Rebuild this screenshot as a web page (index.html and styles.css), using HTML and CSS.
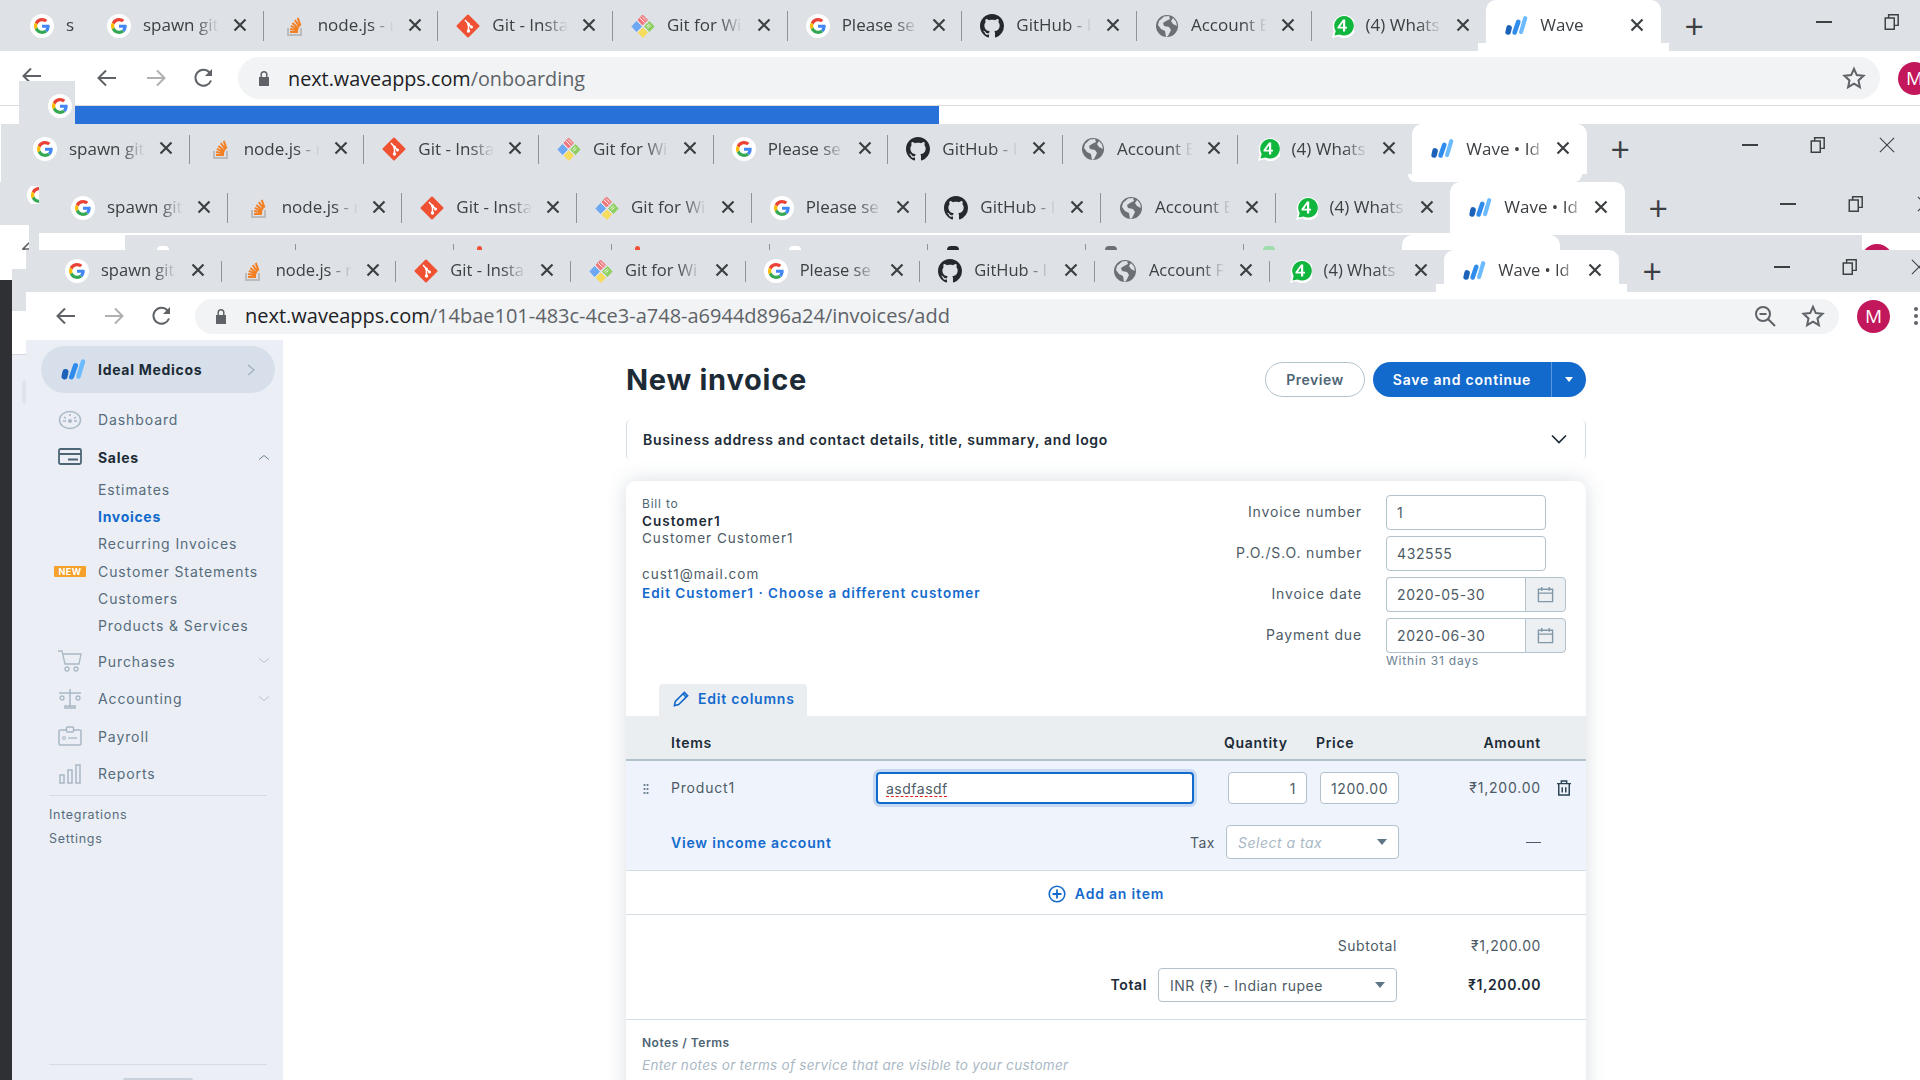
FILE: index.html
```html
<!DOCTYPE html>
<html lang="en">
<head>
    <meta charset="UTF-8">
    <title>Wave - New invoice</title>
    <link rel="stylesheet" href="styles.css">
</head>
<body>
    <svg class="defs" aria-hidden="true">
        <symbol id="i-google" viewBox="-12 -12 72 72">
            <circle cx="24" cy="24" r="36" fill="#fff"/>
            <path fill="#EA4335" d="M24 9.5c3.54 0 6.71 1.22 9.21 3.6l6.85-6.85C35.9 2.38 30.47 0 24 0 14.62 0 6.51 5.38 2.56 13.22l7.98 6.19C12.43 13.72 17.74 9.5 24 9.5z"/>
            <path fill="#4285F4" d="M46.98 24.55c0-1.57-.15-3.09-.38-4.55H24v9.02h12.94c-.58 2.96-2.26 5.48-4.78 7.18l7.73 6c4.51-4.18 7.09-10.36 7.09-17.65z"/>
            <path fill="#FBBC05" d="M10.53 28.59c-.48-1.45-.76-2.99-.76-4.59s.27-3.14.76-4.59l-7.98-6.19C.92 16.46 0 20.12 0 24c0 3.88.92 7.54 2.56 10.78l7.97-6.19z"/>
            <path fill="#34A853" d="M24 48c6.48 0 11.93-2.13 15.89-5.81l-7.73-6c-2.15 1.45-4.92 2.3-8.16 2.3-6.26 0-11.57-4.22-13.47-9.91l-7.98 6.19C6.51 42.62 14.62 48 24 48z"/>
        </symbol>
        <symbol id="i-so" viewBox="0 0 24 24">
            <path fill="#bcbbbb" d="M5 14h2v6h11v-6h2v8H5z"/>
            <path fill="#f48024" d="M8 17h8v2H8zM8.300 14l8 1.500-.4 2-8-1.600zM9.200 11l7.400 3.400-.8 1.800-7.400-3.400zM11 8.200l6.300 5.200-1.300 1.500-6.300-5.200zM13.600 5.600l4.800 6.500-1.600 1.200-4.800-6.500zM16.700 3.600l2.700 7.600-1.900.7-2.700-7.600z"/>
        </symbol>
        <symbol id="i-git" viewBox="0 0 24 24">
            <path fill="#f05133" stroke="#f05133" stroke-width="2" stroke-linejoin="round" d="M12 1.500L22.500 12 12 22.500 1.500 12z"/>
            <path stroke="#fff" stroke-width="1.500" fill="none" d="M9 6l3.500 4v7.500M12.500 10l3 3"/>
            <circle cx="12.500" cy="17" r="1.700" fill="#fff"/>
            <circle cx="12.500" cy="10" r="1.500" fill="#fff"/>
            <circle cx="15.500" cy="13" r="1.500" fill="#fff"/>
        </symbol>
        <symbol id="i-gitwin" viewBox="0 0 24 24">
            <g stroke-width="1" stroke-linejoin="round">
                <path fill="#f0787c" stroke="#f0787c" d="M11.500 1l5 5-5 5-4.500-5z"/>
                <path fill="#6ea8f2" stroke="#6ea8f2" d="M5.500 7.500l5 5-5 5L1 12.500z"/>
                <path fill="#8fd060" stroke="#8fd060" d="M18.500 7.500l4.500 5-4.500 5-5-5z"/>
                <path fill="#f6dc5c" stroke="#f6dc5c" d="M12 14l4.500 4.500-4.500 5-5-5z"/>
            </g>
            <path stroke="#fff" stroke-width=".9" fill="none" d="M9 4l4.500 4.500M11 2.500l4 4M15.500 12.500l3-2.500M16.500 14l3-2.500"/>
        </symbol>
        <symbol id="i-github" viewBox="0 0 16 16">
            <path fill="#24292e" d="M8 0C3.58 0 0 3.58 0 8c0 3.54 2.29 6.53 5.47 7.59.4.07.55-.17.55-.38 0-.19-.01-.82-.01-1.49-2.01.37-2.53-.49-2.69-.94-.09-.23-.48-.94-.82-1.13-.28-.15-.68-.52-.01-.53.63-.01 1.08.58 1.23.82.72 1.21 1.87.87 2.33.66.07-.52.28-.87.51-1.07-1.78-.2-3.64-.89-3.64-3.95 0-.87.31-1.59.82-2.15-.08-.2-.36-1.02.08-2.12 0 0 .67-.21 2.2.82.64-.18 1.32-.27 2-.27.68 0 1.36.09 2 .27 1.53-1.04 2.2-.82 2.2-.82.44 1.1.16 1.92.08 2.12.51.56.82 1.27.82 2.15 0 3.07-1.87 3.75-3.65 3.95.29.25.54.73.54 1.48 0 1.07-.01 1.93-.01 2.2 0 .21.15.46.55.38A8.013 8.013 0 0016 8c0-4.42-3.58-8-8-8z"/>
        </symbol>
        <symbol id="i-globe" viewBox="0 0 24 24">
            <circle cx="12" cy="12" r="11" fill="#6b7075"/>
            <path fill="#dee1e6" d="M9 2.500l5-.5 1 3-4 2-3 2 1 3 5 1 2 3-3 6-2 1-1-6-4-2-3-4 1-4zM18 4l3 3.500 1 4.500-4-2-2-3z"/>
        </symbol>
        <symbol id="i-whats" viewBox="0 0 24 24">
            <path fill="#fff" d="M2 24l1.800-6.500A11.500 11.500 0 1 1 8 22.300z"/>
            <path fill="#11b63e" d="M4.500 21.500l1.200-4.500A9.800 9.800 0 1 1 9.500 20.500z"/>
            <path fill="#fff" d="M13 5.500h2.200v7.200H17v1.800h-1.800v3H13v-3H7.500v-1.600zM13 8.500l-3 4.200h3z"/>
        </symbol>
        <symbol id="i-wave" viewBox="0 0 26 24">
            <g fill="none" stroke-linecap="round">
                <path stroke="#1c62b8" stroke-width="6" d="M5.500 14L4.500 18.500"/>
                <path stroke="#2f8bec" stroke-width="5" d="M11.500 19L15.500 7.500"/>
                <path stroke="#6dbbff" stroke-width="4.500" d="M18.500 18.500L23 3.500"/>
            </g>
        </symbol>
        <symbol id="i-x" viewBox="0 0 14 14">
            <path stroke="#3c4043" stroke-width="2.200" fill="none" d="M1.500 1.500l11 11M12.500 1.500l-11 11"/>
        </symbol>
        <symbol id="i-x-thin" viewBox="0 0 18 18">
            <path stroke="#3c4043" stroke-width="1.200" fill="none" d="M1 1l16 16M17 1L1 17"/>
        </symbol>
        <symbol id="i-back" viewBox="0 0 24 24">
            <path stroke="#5f6368" stroke-width="2" fill="none" d="M21 12H4M11 4.500L3.500 12l7.500 7.500"/>
        </symbol>
        <symbol id="i-reload" viewBox="0 0 24 24">
            <path stroke="#5f6368" stroke-width="2" fill="none" d="M19 14.500A8 8 0 1 1 17.500 6.500"/>
            <path fill="#5f6368" d="M20 3v7h-7z"/>
        </symbol>
        <symbol id="i-lock" viewBox="0 0 12 16">
            <path fill="#5f6368" d="M1 7h10v9H1z"/>
            <path stroke="#5f6368" stroke-width="1.500" fill="none" d="M3.200 7V4.500a2.800 2.800 0 0 1 5.600 0V7"/>
        </symbol>
        <symbol id="i-star" viewBox="0 0 24 24">
            <path stroke="#5f6368" stroke-width="2" fill="none" d="M12 2.800l2.800 6.300 6.700.7-5 4.600 1.400 6.800-5.900-3.500-5.900 3.500 1.400-6.800-5-4.600 6.700-.7z"/>
        </symbol>
        <symbol id="i-restore" viewBox="0 0 16 16">
            <path stroke="#3c4043" stroke-width="1.300" fill="none" d="M2 4.500h8v10H2zM5 4.500V1.500h8.500V11H10"/>
        </symbol>
        <symbol id="i-cal" viewBox="0 0 18 18">
            <path stroke="#8198a8" stroke-width="1.500" fill="none" d="M1.500 3.500h15v13h-15zM1.500 7.500h15M5 1v4M13 1v4"/>
        </symbol>
        <symbol id="i-caret" viewBox="0 0 10 6">
            <path fill="currentColor" d="M0 0h10L5 6z"/>
        </symbol>
    </svg>

    <!-- oldest window, top of the pile -->
    <div class="win win-a">
        <div class="strip">
            <div class="tab stub"><svg class="fav"><use href="#i-google"/></svg><span class="title">s</span></div>
            <div class="tab"><svg class="fav"><use href="#i-google"/></svg><span class="title">spawn git</span><svg class="close"><use href="#i-x"/></svg></div>
            <div class="tab"><svg class="fav"><use href="#i-so"/></svg><span class="title">node.js - r</span><svg class="close"><use href="#i-x"/></svg></div>
            <div class="tab"><svg class="fav"><use href="#i-git"/></svg><span class="title">Git - Insta</span><svg class="close"><use href="#i-x"/></svg></div>
            <div class="tab"><svg class="fav"><use href="#i-gitwin"/></svg><span class="title">Git for Wi</span><svg class="close"><use href="#i-x"/></svg></div>
            <div class="tab"><svg class="fav"><use href="#i-google"/></svg><span class="title">Please se</span><svg class="close"><use href="#i-x"/></svg></div>
            <div class="tab"><svg class="fav"><use href="#i-github"/></svg><span class="title">GitHub - I</span><svg class="close"><use href="#i-x"/></svg></div>
            <div class="tab"><svg class="fav"><use href="#i-globe"/></svg><span class="title">Account E</span><svg class="close"><use href="#i-x"/></svg></div>
            <div class="tab last"><svg class="fav"><use href="#i-whats"/></svg><span class="title">(4) Whats</span><svg class="close"><use href="#i-x"/></svg></div>
            <div class="tab active"><svg class="fav"><use href="#i-wave"/></svg><span class="title">Wave</span><svg class="close"><use href="#i-x"/></svg></div>
            <div class="new-tab">+</div>
            <div class="win-ctl"><span class="min"></span><svg class="restore"><use href="#i-restore"/></svg></div>
        </div>
        <div class="toolbar">
            <div class="nav-btns">
                <svg class="tool"><use href="#i-back"/></svg>
                <svg class="tool faded flip"><use href="#i-back"/></svg>
                <svg class="tool"><use href="#i-reload"/></svg>
            </div>
            <div class="omnibox">
                <svg class="lock"><use href="#i-lock"/></svg>
                <span class="url">next.waveapps.com<span class="path">/onboarding</span></span>
                <svg class="tool star"><use href="#i-star"/></svg>
            </div>
            <div class="avatar">M</div>
        </div>
        <div class="loading"><div class="loading-bar"></div></div>
    </div>

    <!-- bits of the window behind at the top left -->
    <div class="scrap back-arrow-top"><svg class="tool"><use href="#i-back"/></svg></div>
    <div class="scrap g-block"><svg class="fav"><use href="#i-google"/></svg></div>

    <div class="win win-b">
        <div class="strip">
            <div class="tab"><svg class="fav"><use href="#i-google"/></svg><span class="title">spawn git</span><svg class="close"><use href="#i-x"/></svg></div>
            <div class="tab"><svg class="fav"><use href="#i-so"/></svg><span class="title">node.js - r</span><svg class="close"><use href="#i-x"/></svg></div>
            <div class="tab"><svg class="fav"><use href="#i-git"/></svg><span class="title">Git - Insta</span><svg class="close"><use href="#i-x"/></svg></div>
            <div class="tab"><svg class="fav"><use href="#i-gitwin"/></svg><span class="title">Git for Wi</span><svg class="close"><use href="#i-x"/></svg></div>
            <div class="tab"><svg class="fav"><use href="#i-google"/></svg><span class="title">Please se</span><svg class="close"><use href="#i-x"/></svg></div>
            <div class="tab"><svg class="fav"><use href="#i-github"/></svg><span class="title">GitHub - I</span><svg class="close"><use href="#i-x"/></svg></div>
            <div class="tab"><svg class="fav"><use href="#i-globe"/></svg><span class="title">Account E</span><svg class="close"><use href="#i-x"/></svg></div>
            <div class="tab last"><svg class="fav"><use href="#i-whats"/></svg><span class="title">(4) Whats</span><svg class="close"><use href="#i-x"/></svg></div>
            <div class="tab active"><svg class="fav"><use href="#i-wave"/></svg><span class="title">Wave • Id</span><svg class="close"><use href="#i-x"/></svg></div>
            <div class="new-tab">+</div>
            <div class="win-ctl"><span class="min"></span><svg class="restore"><use href="#i-restore"/></svg><svg class="ctl-x"><use href="#i-x-thin"/></svg></div>
        </div>
        <div class="tab-foot"></div>
    </div>

    <div class="win win-c">
        <div class="strip">
            <div class="tab"><svg class="fav"><use href="#i-google"/></svg><span class="title">spawn git</span><svg class="close"><use href="#i-x"/></svg></div>
            <div class="tab"><svg class="fav"><use href="#i-so"/></svg><span class="title">node.js - r</span><svg class="close"><use href="#i-x"/></svg></div>
            <div class="tab"><svg class="fav"><use href="#i-git"/></svg><span class="title">Git - Insta</span><svg class="close"><use href="#i-x"/></svg></div>
            <div class="tab"><svg class="fav"><use href="#i-gitwin"/></svg><span class="title">Git for Wi</span><svg class="close"><use href="#i-x"/></svg></div>
            <div class="tab"><svg class="fav"><use href="#i-google"/></svg><span class="title">Please se</span><svg class="close"><use href="#i-x"/></svg></div>
            <div class="tab"><svg class="fav"><use href="#i-github"/></svg><span class="title">GitHub - I</span><svg class="close"><use href="#i-x"/></svg></div>
            <div class="tab"><svg class="fav"><use href="#i-globe"/></svg><span class="title">Account E</span><svg class="close"><use href="#i-x"/></svg></div>
            <div class="tab last"><svg class="fav"><use href="#i-whats"/></svg><span class="title">(4) Whats</span><svg class="close"><use href="#i-x"/></svg></div>
            <div class="tab active"><svg class="fav"><use href="#i-wave"/></svg><span class="title">Wave • Id</span><svg class="close"><use href="#i-x"/></svg></div>
            <div class="new-tab">+</div>
            <div class="win-ctl"><span class="min"></span><svg class="restore"><use href="#i-restore"/></svg><svg class="ctl-x"><use href="#i-x-thin"/></svg></div>
        </div>
    </div>
    <div class="scrap g-clip"><svg class="fav"><use href="#i-google"/></svg></div>

    <!-- sliver of one more window, only the tops of its tabs show -->
    <div class="scrap left-gray"></div>
    <div class="scrap sliver">
        <div class="sliver-strip">
            <div class="sliver-tab sep"><i class="blip white"></i></div>
            <div class="sliver-tab sep"></div>
            <div class="sliver-tab sep"><i class="blip red"></i></div>
            <div class="sliver-tab sep"><i class="blip red"></i></div>
            <div class="sliver-tab sep"><i class="blip white"></i></div>
            <div class="sliver-tab sep"><i class="blip dark"></i></div>
            <div class="sliver-tab sep"><i class="blip gray"></i></div>
            <div class="sliver-tab"><i class="blip green"></i></div>
            <div class="sliver-active"></div>
        </div>
        <i class="sliver-avatar"></i>
    </div>
    <div class="scrap left-white"><svg class="tool"><use href="#i-back"/></svg></div>
    <div class="scrap left-white2"></div>
    <div class="scrap left-white3"></div>
    <div class="scrap left-gray2"></div>
    <div class="scrap dark-rail"></div>
    <div class="scrap side-rail"></div>
    <div class="scrap side-bump"></div>

    <!-- front window with the invoice form -->
    <div class="win win-d">
        <div class="strip">
            <div class="tab"><svg class="fav"><use href="#i-google"/></svg><span class="title">spawn git</span><svg class="close"><use href="#i-x"/></svg></div>
            <div class="tab"><svg class="fav"><use href="#i-so"/></svg><span class="title">node.js - r</span><svg class="close"><use href="#i-x"/></svg></div>
            <div class="tab"><svg class="fav"><use href="#i-git"/></svg><span class="title">Git - Insta</span><svg class="close"><use href="#i-x"/></svg></div>
            <div class="tab"><svg class="fav"><use href="#i-gitwin"/></svg><span class="title">Git for Wi</span><svg class="close"><use href="#i-x"/></svg></div>
            <div class="tab"><svg class="fav"><use href="#i-google"/></svg><span class="title">Please se</span><svg class="close"><use href="#i-x"/></svg></div>
            <div class="tab"><svg class="fav"><use href="#i-github"/></svg><span class="title">GitHub - I</span><svg class="close"><use href="#i-x"/></svg></div>
            <div class="tab"><svg class="fav"><use href="#i-globe"/></svg><span class="title">Account F</span><svg class="close"><use href="#i-x"/></svg></div>
            <div class="tab last"><svg class="fav"><use href="#i-whats"/></svg><span class="title">(4) Whats</span><svg class="close"><use href="#i-x"/></svg></div>
            <div class="tab active"><svg class="fav"><use href="#i-wave"/></svg><span class="title">Wave • Id</span><svg class="close"><use href="#i-x"/></svg></div>
            <div class="new-tab">+</div>
            <div class="win-ctl"><span class="min"></span><svg class="restore"><use href="#i-restore"/></svg><svg class="ctl-x"><use href="#i-x-thin"/></svg></div>
        </div>
        <div class="toolbar">
            <div class="nav-btns">
                <svg class="tool"><use href="#i-back"/></svg>
                <svg class="tool faded flip"><use href="#i-back"/></svg>
                <svg class="tool"><use href="#i-reload"/></svg>
            </div>
            <div class="omnibox">
                <svg class="lock"><use href="#i-lock"/></svg>
                <span class="url">next.waveapps.com<span class="path">/14bae101-483c-4ce3-a748-a6944d896a24/invoices/add</span></span>
                <svg class="tool zoom-out" viewBox="0 0 24 24"><circle cx="10" cy="10" r="7" stroke="#5f6368" stroke-width="2" fill="none"/><path stroke="#5f6368" stroke-width="2" d="M6.500 10h7M15 15l7 7"/></svg>
                <svg class="tool star"><use href="#i-star"/></svg>
            </div>
            <div class="avatar">M</div>
            <div class="kebab"><i></i><i></i><i></i></div>
        </div>

        <div class="app">
            <aside class="sidebar">
                <div class="biz-pill">
                    <svg class="biz-logo"><use href="#i-wave"/></svg>
                    <span class="biz-name">Ideal Medicos</span>
                    <svg class="biz-arrow" viewBox="0 0 8 12"><path stroke="#9fb0bd" stroke-width="1.300" fill="none" d="M1 1l6 5-6 5"/></svg>
                </div>
                <nav class="side-nav">
                    <a class="nav-row">
                        <svg class="nav-icon" viewBox="0 0 24 24"><ellipse cx="12" cy="12" rx="10.500" ry="8.500" fill="none" stroke="#a9b8c4" stroke-width="1.500"/><circle cx="12" cy="13" r="2" fill="#a9b8c4"/><path stroke="#a9b8c4" stroke-width="1.500" d="M12 6v2M6 9l2 1.500M18 9l-2 1.500M5 13h3M16 13h3"/></svg>
                        Dashboard
                    </a>
                    <a class="nav-row current">
                        <svg class="nav-icon" viewBox="0 0 24 24"><rect x="1" y="4" width="22" height="15" rx="1.500" fill="none" stroke="#4d6575" stroke-width="1.800"/><path stroke="#4d6575" stroke-width="1.800" d="M1 9h22M10 14.500h10"/></svg>
                        Sales
                        <svg class="nav-chev up" viewBox="0 0 12 6"><path stroke="#6f8494" fill="none" d="M1 5.500l5-4 5 4"/></svg>
                    </a>
                    <div class="sub-nav">
                        <a class="sub-row">Estimates</a>
                        <a class="sub-row on">Invoices</a>
                        <a class="sub-row">Recurring Invoices</a>
                        <a class="sub-row"><span class="new-badge">NEW</span>Customer Statements</a>
                        <a class="sub-row">Customers</a>
                        <a class="sub-row">Products &amp; Services</a>
                    </div>
                    <a class="nav-row">
                        <svg class="nav-icon" viewBox="0 0 24 24"><path fill="none" stroke="#a9b8c4" stroke-width="1.300" d="M0 2h4l3 13h14l2-10H5"/><circle cx="9" cy="20" r="2" fill="none" stroke="#a9b8c4" stroke-width="1.300"/><circle cx="18" cy="20" r="2" fill="none" stroke="#a9b8c4" stroke-width="1.300"/></svg>
                        Purchases
                        <svg class="nav-chev" viewBox="0 0 12 6"><path stroke="#b5c2cc" fill="none" d="M1 .5l5 4 5-4"/></svg>
                    </a>
                    <a class="nav-row">
                        <svg class="nav-icon" viewBox="0 0 24 24"><path fill="none" stroke="#a9b8c4" stroke-width="1.500" d="M1 6h22M12 2v18M7 21h10v-2H7z"/><circle cx="4" cy="11" r="2" fill="none" stroke="#a9b8c4" stroke-width="1.300"/><circle cx="20" cy="11" r="2" fill="none" stroke="#a9b8c4" stroke-width="1.300"/></svg>
                        Accounting
                        <svg class="nav-chev" viewBox="0 0 12 6"><path stroke="#b5c2cc" fill="none" d="M1 .5l5 4 5-4"/></svg>
                    </a>
                    <a class="nav-row">
                        <svg class="nav-icon" viewBox="0 0 24 24"><rect x="1" y="6" width="22" height="15" rx="1" fill="none" stroke="#a9b8c4" stroke-width="1.500"/><rect x="8.500" y="3" width="7" height="5" rx="1" fill="#ebeff5" stroke="#a9b8c4" stroke-width="1.500"/><circle cx="6" cy="14" r="1.500" fill="none" stroke="#a9b8c4"/><path stroke="#a9b8c4" stroke-width="1.300" d="M10 14h9"/></svg>
                        Payroll
                    </a>
                    <a class="nav-row">
                        <svg class="nav-icon" viewBox="0 0 24 24"><path fill="none" stroke="#a9b8c4" stroke-width="1.500" d="M2 13h4v8H2zM10 8h4v13h-4zM18 3h4v18h-4z"/></svg>
                        Reports
                    </a>
                </nav>
                <div class="side-links">
                    <a class="side-link">Integrations</a>
                    <a class="side-link">Settings</a>
                </div>
                <div class="side-foot"><i></i></div>
            </aside>

            <main class="main">
                <header class="page-head">
                    <h1>New invoice</h1>
                    <div class="page-actions">
                        <button class="btn-outline">Preview</button>
                        <div class="btn-split">
                            <span class="btn-save">Save and continue</span>
                            <span class="btn-more"><svg class="caret"><use href="#i-caret"/></svg></span>
                        </div>
                    </div>
                </header>

                <div class="biz-panel">
                    <span>Business address and contact details, title, summary, and logo</span>
                    <svg class="panel-chev" viewBox="0 0 16 10"><path stroke="#1c2b36" stroke-width="1.700" fill="none" d="M1 1.500l7 7 7-7"/></svg>
                </div>

                <section class="card">
                    <div class="inv-head">
                        <div class="bill-to">
                            <div class="bill-label">Bill to</div>
                            <div class="bill-name">Customer1</div>
                            <div>Customer Customer1</div>
                            <div>&nbsp;</div>
                            <div>cust1@mail.com</div>
                            <div class="bill-links"><a>Edit Customer1</a> · <a>Choose a different customer</a></div>
                        </div>
                        <div class="inv-fields">
                            <label class="f-label">Invoice number</label>
                            <input class="f-input" value="1">
                            <label class="f-label">P.O./S.O. number</label>
                            <input class="f-input" value="432555">
                            <label class="f-label">Invoice date</label>
                            <div class="date-field"><input value="2020-05-30"><span class="date-btn"><svg><use href="#i-cal"/></svg></span></div>
                            <label class="f-label">Payment due</label>
                            <div class="date-field"><input value="2020-06-30"><span class="date-btn"><svg><use href="#i-cal"/></svg></span></div>
                            <span></span>
                            <div class="f-hint">Within 31 days</div>
                        </div>
                    </div>

                    <div class="edit-cols">
                        <svg viewBox="0 0 18 18"><path stroke="#136acd" stroke-width="1.700" fill="none" d="M1.500 16.500l1-4.500L12 2.500l3.500 3.500L6 15.500zM10.500 4l3.500 3.500"/></svg>
                        Edit columns
                    </div>

                    <div class="item-grid item-head">
                        <span class="col-name">Items</span>
                        <span class="col-qty">Quantity</span>
                        <span class="col-price">Price</span>
                        <span class="col-amount">Amount</span>
                    </div>

                    <div class="item-body">
                        <div class="item-grid">
                            <span class="drag"></span>
                            <span class="col-name plain">Product1</span>
                            <div class="desc-input"><span class="misspelt">asdfasdf</span></div>
                            <input class="cell-input qty" value="1">
                            <input class="cell-input price" value="1200.00">
                            <span class="col-amount plain">₹1,200.00</span>
                            <svg class="trash" viewBox="0 0 16 18"><path stroke="#2d4454" stroke-width="1.700" fill="none" d="M0 4h16M2 4v13h12V4M5 4V1h6v3M6 8v6M10 8v6"/></svg>
                        </div>
                        <div class="item-grid tax-row">
                            <a class="income-link">View income account</a>
                            <span class="tax-label">Tax</span>
                            <div class="select-box tax-select"><em>Select a tax</em><svg class="caret"><use href="#i-caret"/></svg></div>
                            <span class="col-amount dash"></span>
                        </div>
                    </div>

                    <div class="add-item">
                        <svg viewBox="0 0 18 18"><circle cx="9" cy="9" r="7.800" stroke="#136acd" stroke-width="1.600" fill="none"/><path stroke="#136acd" stroke-width="1.800" d="M9 4.500v9M4.500 9h9"/></svg>
                        Add an item
                    </div>

                    <div class="totals">
                        <div class="total-row">
                            <span>Subtotal</span>
                            <span class="total-val">₹1,200.00</span>
                        </div>
                        <div class="total-row grand">
                            <strong>Total</strong>
                            <div class="select-box cur-select"><span>INR (₹) - Indian rupee</span><svg class="caret"><use href="#i-caret"/></svg></div>
                            <strong class="total-val">₹1,200.00</strong>
                        </div>
                    </div>

                    <div class="notes">
                        <div class="notes-label">Notes / Terms</div>
                        <div class="notes-hint">Enter notes or terms of service that are visible to your customer</div>
                    </div>
                </section>
            </main>
        </div>
    </div>
</body>
</html>
```

FILE: styles.css
```css
* {
    box-sizing: border-box;
}

html, body {
    height: 100%;
}

body {
    margin: 0;
    overflow: hidden;
    position: relative;
    background-color: #fff;
    color: #1c2b36;
    font-family: 'Inter', 'Liberation Sans', sans-serif;
    font-size: 14px;
}

a {
    color: inherit;
}

.defs {
    position: absolute;
    width: 0;
    height: 0;
}

/* windows on the pile */
.win {
    position: absolute;
    left: 0;
    right: 0;
}
.win-a { top: 0; height: 124px; }
.win-b { top: 124px; left: 1px; height: 58px; background-color: #dee1e6; }
.win-c { top: 182px; height: 51px; background-color: #dee1e6; }
.win-d { top: 250px; left: 26px; bottom: 0; display: flex; flex-direction: column; background-color: #fff; }

.strip {
    display: flex;
    align-items: center;
    height: 51px;
    background-color: #dee1e6;
    font-family: 'Open Sans', sans-serif;
    font-size: 17px;
    color: #3c4043;
    overflow: hidden;
}
.win-a .strip { padding-left: 12px; }
.win-b .strip { height: 50px; padding-left: 14px; }
.win-c .strip { padding-left: 53px; }
.win-d .strip { height: 42px; padding-left: 21px; font-size: 16.500px; }

.tab {
    position: relative;
    flex: none;
    display: flex;
    align-items: center;
    width: 174.67px;
    height: 100%;
    padding-left: 18px;
}
.tab::after {
    content: '';
    position: absolute;
    right: 0;
    top: 11px;
    bottom: 10px;
    width: 1px;
    background-color: #8f9498;
}
.tab.last::after, .tab.stub::after, .tab.active::after {
    display: none;
}
.tab.stub {
    width: 77px;
}
.tab.stub .title {
    width: 12px;
    margin-left: 12px;
}
.tab.active {
    width: 175px;
    background-color: #fff;
    border-radius: 10px 10px 0 0;
}
.tab.active::before {
    content: '';
    position: absolute;
    left: -8px;
    right: -8px;
    bottom: 0;
    height: 8px;
    z-index: -1;
    background-color: #fff;
}
.win-a .tab.active, .win-d .tab.active { z-index: 1; }

.fav {
    flex: none;
    width: 24px;
    height: 24px;
}
.title {
    flex: none;
    width: 80px;
    margin: -2px 0 0 12px;
    white-space: nowrap;
    -webkit-mask-image: linear-gradient(90deg, #000 65%, transparent 95%);
    mask-image: linear-gradient(90deg, #000 65%, transparent 95%);
}
.win-d .title {
    margin-top: -3px;
}
.tab.active .title {
    -webkit-mask-image: linear-gradient(90deg, #000 78%, transparent);
    mask-image: linear-gradient(90deg, #000 78%, transparent);
}
.close {
    flex: none;
    width: 14px;
    height: 14px;
    margin: -2px 0 0 10px;
}
.new-tab {
    flex: none;
    width: 28px;
    margin-left: 19px;
    text-align: center;
    font-size: 34px;
    line-height: 34px;
    font-weight: 400;
    color: #3c4043;
}
.win-ctl {
    flex: none;
    display: flex;
    align-items: center;
    margin-left: 108px;
    margin-top: -8px;
}
.win-ctl .min {
    width: 16px;
    height: 2px;
    background-color: #3c4043;
}
.win-ctl .restore {
    width: 18px;
    height: 18px;
    margin-left: 51px;
}
.ctl-x {
    flex: none;
    width: 16px;
    height: 20px;
    margin-left: 52px;
}

/* address bar */
.toolbar {
    display: flex;
    align-items: center;
    height: 54px;
    background-color: #fff;
}
.win-d .toolbar {
    height: 48px;
    flex: none;
}
.nav-btns {
    display: flex;
    gap: 24.5px;
    padding-left: 95px;
}
.win-d .nav-btns {
    gap: 24px;
    padding-left: 28px;
}
.tool {
    width: 24px;
    height: 24px;
    flex: none;
}
.faded { opacity: .5; }
.flip { transform: scaleX(-1); }

.omnibox {
    flex: none;
    display: flex;
    align-items: center;
    width: 1642px;
    height: 42px;
    margin-left: 22px;
    padding-left: 20px;
    border-radius: 21px;
    background-color: #f1f3f4;
}
.win-d .omnibox {
    width: 1644px;
    height: 35px;
    margin-left: 21px;
    border-radius: 18px;
}
.lock {
    width: 12px;
    height: 16px;
    flex: none;
}
.url {
    margin-left: 18px;
    font-family: 'Open Sans', sans-serif;
    font-size: 19.800px;
    color: #202124;
    white-space: nowrap;
}
.win-d .url {
    margin: -2px 0 0 18px;
    font-size: 20px;
}
.path {
    color: #5f6368;
}
.star {
    margin-left: auto;
    margin-right: 14px;
}
.zoom-out {
    margin-left: auto;
    margin-right: 24px;
}
.zoom-out + .star {
    margin-left: 0;
}
.avatar {
    flex: none;
    width: 33px;
    height: 33px;
    margin-left: 18px;
    border-radius: 50%;
    background-color: #c2185b;
    color: #fff;
    font-family: 'Open Sans', sans-serif;
    font-size: 19px;
    line-height: 33px;
    text-align: center;
}
.kebab {
    display: flex;
    flex-direction: column;
    gap: 3px;
    margin-left: 24px;
}
.kebab i {
    width: 4px;
    height: 4px;
    border-radius: 50%;
    background-color: #5f6368;
}

.loading {
    height: 19px;
    border-top: 1px solid #dadce0;
    padding-left: 75px;
}
.loading-bar {
    width: 864px;
    height: 18px;
    background-color: #2771d8;
}

/* left over pieces of the other windows */
.scrap {
    position: absolute;
}
.back-arrow-top { left: 20px; top: 64px; }
.g-block { left: 19px; top: 81px; width: 56px; height: 43px; background-color: #dee1e6; }
.g-block .fav { position: absolute; left: 29px; top: 13px; }
.g-clip { left: 27px; top: 186px; width: 12px; height: 18px; overflow: hidden; }
.g-clip .fav { position: absolute; left: 0; top: -3px; }
.tab-foot {
    width: 174px;
    height: 8px;
    margin-left: 1407px;
    background-color: #fff;
    border-radius: 0 0 10px 10px;
}
.left-gray { left: 0; top: 233px; width: 39px; height: 17px; background-color: #dee1e6; }
.left-white { left: 0; top: 225px; width: 29px; height: 25px; background-color: #fff; overflow: hidden; }
.left-white .tool { position: absolute; left: 20px; top: 14px; width: 20px; height: 20px; }
.left-white2 { left: 0; top: 250px; width: 26px; height: 19px; background-color: #fff; }
.left-white3 { left: 0; top: 269px; width: 12px; height: 11px; background-color: #fff; }
.left-gray2 { left: 12px; top: 269px; width: 14px; height: 42px; background-color: #dee1e6; }
.dark-rail { left: 0; top: 280px; bottom: 0; width: 12px; background-color: #2e3033; }
.side-rail { left: 12px; top: 354px; bottom: 0; width: 14px; background-color: #ebeff5; border-top: 1px solid #d5d9dd; }
.side-bump { left: 22px; top: 380px; width: 4px; height: 24px; background-color: #dfe4ec; border-radius: 4px 0 0 4px; }

.sliver {
    left: 39px;
    right: 0;
    top: 233px;
    height: 17px;
    padding-top: 2px;
    background-color: #fff;
    overflow: hidden;
}
.sliver-strip {
    display: flex;
    width: 1737px;
    height: 15px;
    margin-left: 86px;
    padding-left: 13px;
    background-color: #dee1e6;
}
.sliver-tab {
    position: relative;
    width: 158px;
}
.sliver-tab.sep {
    border-right: 1px solid #8f9498;
    border-image: linear-gradient(transparent 9px, #8f9498 9px) 1;
}
.sliver-active {
    width: 158px;
    background-color: #fff;
    border-radius: 10px 10px 0 0;
}
.blip {
    position: absolute;
    left: 19px;
    bottom: 0;
    width: 12px;
    height: 4px;
    border-radius: 6px 6px 0 0;
}
.blip.white { background-color: #fff; }
.blip.red { left: 23px; width: 5px; background-color: #f05133; }
.blip.dark { background-color: #24292e; }
.blip.gray { background-color: #6b7075; }
.blip.green { background-color: #9fdcae; }
.sliver-avatar {
    position: absolute;
    left: 1822px;
    top: 11px;
    width: 32px;
    height: 32px;
    border-radius: 50%;
    background-color: #c2185b;
}

/* the app */
.app {
    flex: 1;
    display: flex;
    min-height: 0;
}
.sidebar {
    flex: none;
    display: flex;
    flex-direction: column;
    width: 257px;
    padding-top: 6px;
    background-color: #ebeff5;
    color: #566c7c;
    letter-spacing: .9px;
}
.biz-pill {
    display: flex;
    align-items: center;
    flex: none;
    width: 234px;
    height: 47px;
    margin-left: 15px;
    padding-left: 17px;
    border-radius: 24px;
    background-color: #d7e0ea;
}
.biz-logo {
    width: 30px;
    height: 24px;
    flex: none;
}
.biz-name {
    margin-left: 10px;
    color: #1c2b36;
    font-weight: 700;
    letter-spacing: .7px;
}
.biz-arrow {
    width: 8px;
    height: 12px;
    margin-left: auto;
    margin-right: 20px;
}
.side-nav {
    margin-top: 8px;
}
.nav-row {
    display: flex;
    align-items: center;
    height: 37.5px;
    padding-left: 32px;
}
.nav-icon {
    flex: none;
    width: 24px;
    height: 24px;
    margin-right: 16px;
}
.nav-row.current {
    color: #1c2b36;
    font-weight: 700;
    letter-spacing: .7px;
}
.nav-chev {
    width: 12px;
    height: 6px;
    margin-left: auto;
    margin-right: 13px;
}
.sub-nav {
    margin-bottom: 3.500px;
}
.sub-row {
    position: relative;
    display: block;
    height: 27.2px;
    padding-left: 72px;
    line-height: 27.2px;
}
.sub-row.on {
    color: #136acd;
    font-weight: 700;
    letter-spacing: .7px;
}
.new-badge {
    position: absolute;
    left: 28px;
    top: 8px;
    width: 32px;
    height: 11px;
    border-radius: 1px;
    background-color: #f5a02a;
    color: #fff;
    font-size: 9px;
    font-weight: 700;
    line-height: 11px;
    text-align: center;
    letter-spacing: .5px;
}
.side-links {
    margin: 2px 16px 0 23px;
    padding-top: 7px;
    border-top: 1px solid #d4dbe2;
}
.side-link {
    display: block;
    height: 24px;
    font-size: 12.500px;
    line-height: 24px;
    letter-spacing: .7px;
}
.side-foot {
    position: relative;
    flex: none;
    height: 16px;
    margin: auto 16px 0 23px;
    border-top: 1px solid #d4dbe2;
}
.side-foot i {
    position: absolute;
    left: 74px;
    bottom: 0;
    width: 70px;
    height: 2px;
    border-radius: 2px 2px 0 0;
    background-color: #c9d2db;
}

.main {
    flex: 1;
    min-width: 0;
    padding: 22px 0 0 343px;
    overflow: hidden;
}
.main > * {
    width: 960px;
}
.page-head {
    display: flex;
    align-items: center;
    justify-content: space-between;
    height: 35px;
}
h1 {
    margin: 0;
    font-size: 29px;
    font-weight: 700;
    letter-spacing: .75px;
    color: #1c2b36;
}
.page-actions {
    display: flex;
    gap: 8px;
}
.btn-outline {
    width: 100px;
    height: 35px;
    padding: 0;
    border: 1px solid #b2c2cd;
    border-radius: 18px;
    background-color: #fff;
    color: #4d6575;
    font: 600 14px 'Inter', sans-serif;
    letter-spacing: .5px;
}
.btn-split {
    display: flex;
    width: 213px;
    height: 35px;
    border-radius: 18px;
    background-color: #136acd;
    color: #fff;
    font-weight: 600;
    letter-spacing: .8px;
    line-height: 35px;
}
.btn-save {
    width: 178px;
    text-align: center;
}
.btn-more {
    flex: 1;
    display: flex;
    align-items: center;
    justify-content: center;
    border-left: 1px solid #5a97dc;
}
.btn-more .caret {
    width: 8px;
    height: 5px;
}
.caret {
    width: 10px;
    height: 6px;
    flex: none;
}
.biz-panel {
    position: relative;
    display: flex;
    align-items: center;
    justify-content: space-between;
    height: 40px;
    margin-top: 23px;
    padding: 0 19px 2px 17px;
    font-weight: 600;
    letter-spacing: .7px;
}
.biz-panel::before, .biz-panel::after {
    content: '';
    position: absolute;
    top: 0;
    bottom: 0;
    width: 8px;
    border: 1px solid #d4dde3;
    border-radius: 6px;
}
.biz-panel::before { left: 0; border-width: 0 0 0 1px; }
.biz-panel::after { right: 0; border-width: 0 1px 0 0; }
.panel-chev {
    width: 16px;
    height: 10px;
}

.card {
    height: 700px;
    margin-top: 21px;
    border-radius: 10px 10px 0 0;
    background-color: #fff;
    box-shadow: 0 0 20px rgba(77, 101, 117, .22);
}
.inv-head {
    display: flex;
    justify-content: space-between;
    height: 203px;
    padding: 14px 20px 0 16px;
}
.bill-to {
    color: #4d5b66;
    font-size: 13.500px;
    line-height: 17.7px;
    letter-spacing: 1px;
}
.bill-label { color: #4d6575; font-size: 12px; letter-spacing: .8px; }
.bill-name { color: #1c2b36; font-weight: 600; }
.bill-links { margin-top: 1px; color: #136acd; font-weight: 600; }

.inv-fields {
    display: grid;
    grid-template-columns: auto 180px;
    grid-auto-rows: 35px;
    gap: 6px 24px;
    align-items: center;
    color: #4d5b66;
    letter-spacing: .85px;
}
.f-label {
    margin-top: -2px;
    text-align: right;
    font-size: 14px;
}
.f-input, .date-field input, .cell-input {
    height: 100%;
    padding: 0 10px;
    border: 1px solid #b2c2cd;
    border-radius: 4px;
    background-color: #fff;
    color: #4d5b66;
    font: 14px 'Inter', sans-serif;
    letter-spacing: .6px;
    outline: none;
}
.f-input {
    width: 160px;
    height: 35px;
}
.date-field {
    display: flex;
    height: 35px;
}
.date-field input {
    flex: 1;
    min-width: 0;
    border-right: 0;
    border-radius: 4px 0 0 4px;
}
.date-btn {
    flex: none;
    display: flex;
    align-items: center;
    justify-content: center;
    width: 41px;
    border: 1px solid #b2c2cd;
    border-radius: 0 4px 4px 0;
    background-color: #ecf0f3;
}
.date-btn svg {
    width: 17px;
    height: 17px;
}
.f-hint {
    align-self: start;
    margin-top: -6px;
    color: #6b8191;
    font-size: 12px;
    letter-spacing: .8px;
}

.edit-cols {
    display: flex;
    align-items: center;
    gap: 8px;
    width: 148px;
    height: 32px;
    margin-left: 33px;
    padding: 0 0 4px 14px;
    border-radius: 4px 4px 0 0;
    background-color: #ebeef1;
    color: #136acd;
    font-weight: 600;
    letter-spacing: .8px;
}
.edit-cols svg {
    width: 17px;
    height: 17px;
}

.item-grid {
    display: grid;
    grid-template-columns: 45px 205px 318px 34px 79px 13px 79px 142px 1fr;
    align-items: center;
}
.item-head {
    height: 45px;
    padding-top: 10px;
    border-bottom: 2px solid #b2c2cd;
    background-color: #ebeef1;
    font-weight: 600;
    letter-spacing: .7px;
}
.col-name { grid-column: 2; }
.col-qty { grid-column: 5; margin-left: -4px; }
.col-price { grid-column: 7; margin-left: -4px; }
.col-amount { grid-column: 8; text-align: right; }
.plain {
    margin-top: -2px;
    font-weight: 400;
    color: #4d5b66;
    letter-spacing: .8px;
}
.item-body {
    display: grid;
    gap: 21px;
    padding: 11px 0;
    border-bottom: 1px solid #d4dde3;
    background-color: #eff3fb;
}
.item-body > .item-grid:first-child {
    height: 32px;
}
.drag {
    grid-column: 1;
    justify-self: end;
    width: 6px;
    height: 11px;
    margin-right: 22px;
    background-image: radial-gradient(circle, #6b8191 1px, transparent 1.200px);
    background-size: 3px 4px;
}
.desc-input {
    display: flex;
    align-items: center;
    height: 32px;
    padding: 0 8px;
    border: 2px solid #136acd;
    border-radius: 4px;
    background-color: #fff;
    box-shadow: 0 0 0 3px #c5d9f2;
    color: #4d5b66;
    letter-spacing: .5px;
}
.misspelt {
    text-decoration: underline dashed #e02020 1px;
    text-underline-offset: 2px;
}
.cell-input {
    width: 100%;
    height: 32px;
    min-width: 0;
}
.cell-input.qty { grid-column: 5; text-align: right; }
.cell-input.price { grid-column: 7; }
.trash {
    grid-column: 9;
    justify-self: start;
    width: 14px;
    height: 16px;
    margin-left: 16px;
}
.tax-row {
    height: 34px;
}
.tax-row > * {
    grid-row: 1;
}
.income-link {
    grid-column: 2 / 4;
    color: #136acd;
    font-weight: 600;
    letter-spacing: .8px;
}
.tax-label {
    grid-column: 3 / 5;
    justify-self: end;
    margin-right: 13px;
    color: #4d5b66;
    letter-spacing: .5px;
}
.select-box {
    display: flex;
    align-items: center;
    justify-content: space-between;
    height: 34px;
    padding: 0 11px;
    border: 1px solid #b2c2cd;
    border-radius: 4px;
    background-color: #fff;
    color: #4d5b66;
    letter-spacing: .5px;
}
.select-box .caret {
    color: #5f7686;
}
.tax-select {
    grid-column: 5 / 8;
    margin-left: -2px;
}
.tax-select em {
    color: #a9b8c4;
}
.dash {
    justify-self: end;
    width: 15px;
    height: 1px;
    background-color: #4d5b66;
}
.add-item {
    display: flex;
    align-items: center;
    justify-content: center;
    gap: 9px;
    height: 44px;
    padding-top: 2px;
    border-bottom: 1px solid #d4dde3;
    color: #136acd;
    font-weight: 600;
    letter-spacing: .8px;
}
.add-item svg {
    width: 18px;
    height: 18px;
}
.totals {
    height: 105px;
    padding-top: 21px;
    padding-right: 45px;
    border-bottom: 1px solid #d4dde3;
    color: #4d5b66;
    letter-spacing: .6px;
}
.total-row {
    display: flex;
    justify-content: flex-end;
    align-items: center;
    height: 18px;
}
.total-val {
    width: 144px;
    text-align: right;
}
.total-row.grand {
    height: 34px;
    margin-top: 14px;
    gap: 0;
}
.total-row.grand strong {
    margin-top: -2px;
    color: #1c2b36;
    font-weight: 600;
}
.cur-select {
    width: 239px;
    margin-left: 11px;
}
.notes {
    padding: 15px 16px 0;
}
.notes-label {
    color: #4d6575;
    font-size: 12px;
    font-weight: 600;
    letter-spacing: .5px;
}
.notes-hint {
    margin-top: 7px;
    color: #a9b8c4;
    font-size: 13.500px;
    font-style: italic;
    letter-spacing: .3px;
}
```
